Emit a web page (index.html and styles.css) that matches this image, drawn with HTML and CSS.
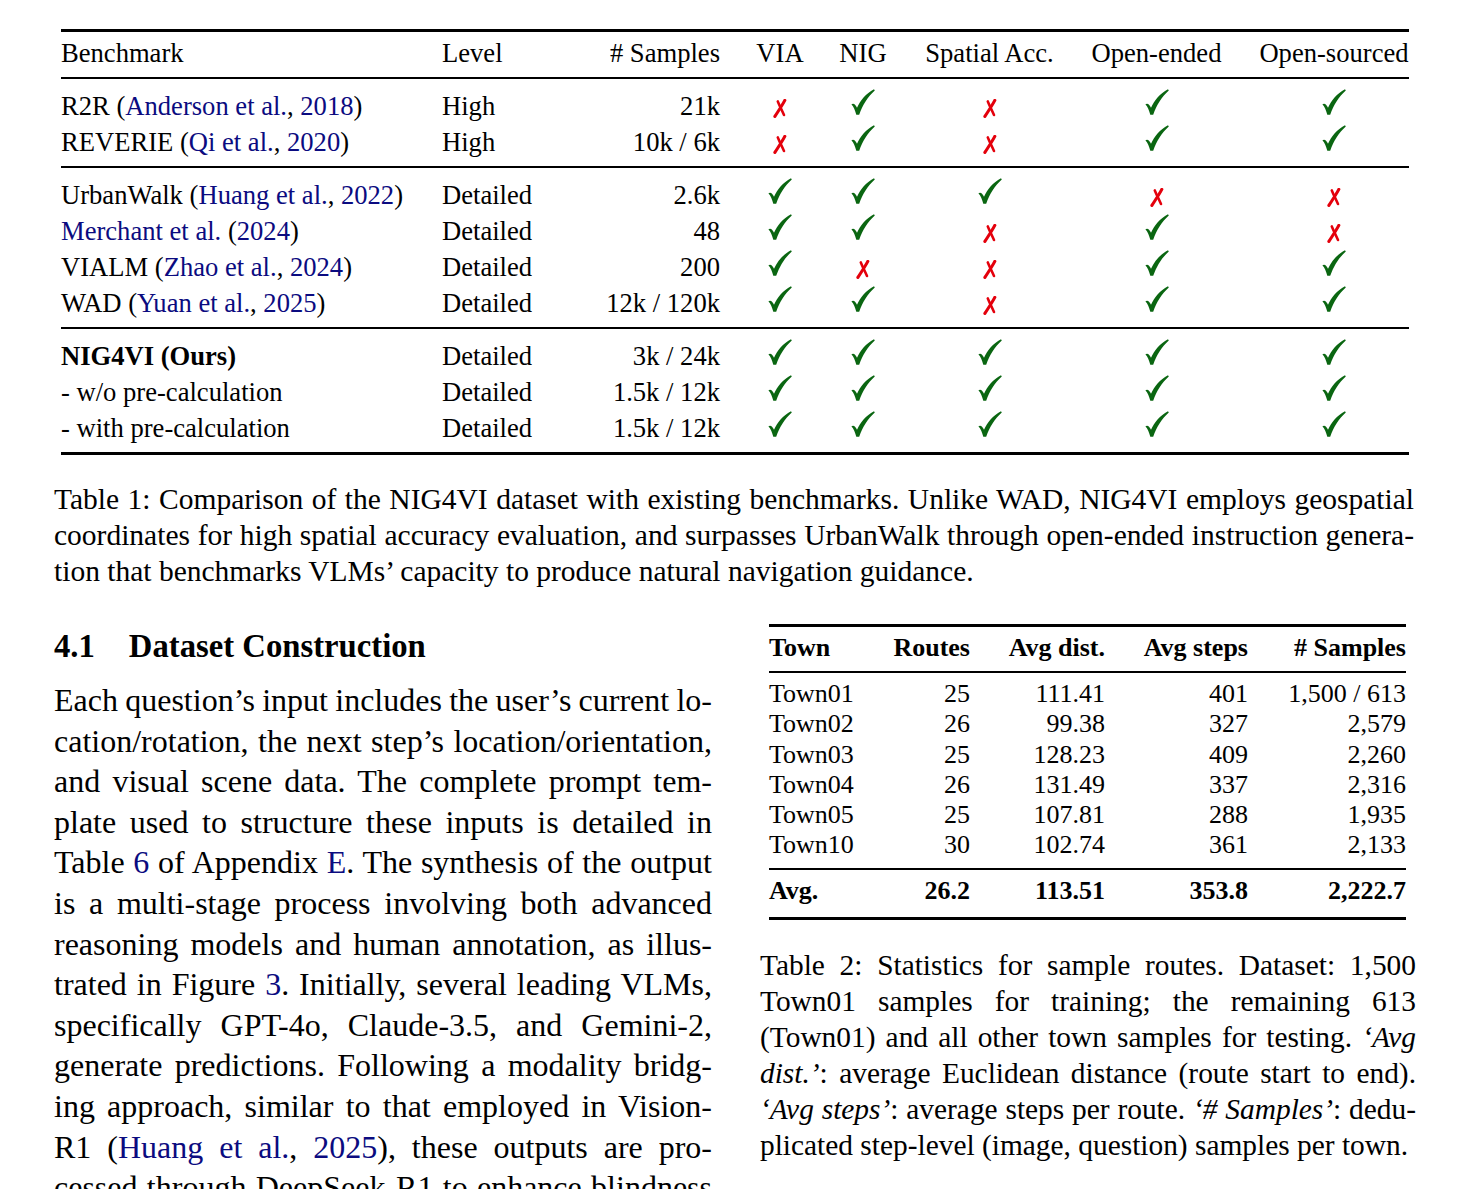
FILE: index.html
```html
<!DOCTYPE html>
<html>
<head>
<meta charset="utf-8">
<link rel="stylesheet" href="styles.css">
<title>NIG4VI</title>
</head>
<body>
<svg width="0" height="0" class="defs">
  <defs>
    <symbol id="chk" viewBox="0 0 24 26">
      <path d="M0.4,15.3 C2.8,13.6 4.7,16.0 6.0,18.8 C9.5,11.2 14.8,4.5 23.0,0.2 L23.8,1.5 C16.8,7.9 11.8,15.5 8.2,25.8 L5.3,25.8 C4.2,21.6 2.6,17.6 0.4,15.3 Z"/>
    </symbol>
    <symbol id="crs" viewBox="0 0 14 19">
      <path d="M11.8,1.4 C9.2,6.4 5.2,12.2 1.9,17.4" fill="none" stroke-width="3.1" stroke-linecap="round"/>
      <path d="M4.8,2.4 C6.9,7.4 9.0,11.6 11.0,16.0" fill="none" stroke-width="2.6" stroke-linecap="round"/>
    </symbol>
  </defs>
</svg>

<div class="page">
  <table class="t1">
    <colgroup>
      <col class="w381"><col class="w130"><col class="w148"><col class="w100"><col class="w86"><col class="w167"><col class="w167"><col class="w169">
    </colgroup>
    <thead>
      <tr>
        <th class="l">Benchmark</th><th class="l">Level</th><th class="r"># Samples</th>
        <th class="c via">VIA</th><th class="c">NIG</th><th class="c">Spatial Acc.</th><th class="c">Open-ended</th><th class="c os">Open-sourced</th>
      </tr>
    </thead>
    <tbody>
      <tr>
        <td>R2R (<span class="cite">Anderson et al.</span>, <span class="cite">2018</span>)</td><td>High</td><td class="r">21k</td>
        <td class="c via"><svg class="x"><use href="#crs"/></svg></td><td class="c"><svg class="ok"><use href="#chk"/></svg></td><td class="c"><svg class="x"><use href="#crs"/></svg></td><td class="c"><svg class="ok"><use href="#chk"/></svg></td><td class="c os"><svg class="ok"><use href="#chk"/></svg></td>
      </tr>
      <tr>
        <td>REVERIE (<span class="cite">Qi et al.</span>, <span class="cite">2020</span>)</td><td>High</td><td class="r">10k / 6k</td>
        <td class="c via"><svg class="x"><use href="#crs"/></svg></td><td class="c"><svg class="ok"><use href="#chk"/></svg></td><td class="c"><svg class="x"><use href="#crs"/></svg></td><td class="c"><svg class="ok"><use href="#chk"/></svg></td><td class="c os"><svg class="ok"><use href="#chk"/></svg></td>
      </tr>
    </tbody>
    <tbody>
      <tr>
        <td>UrbanWalk (<span class="cite">Huang et al.</span>, <span class="cite">2022</span>)</td><td>Detailed</td><td class="r">2.6k</td>
        <td class="c via"><svg class="ok"><use href="#chk"/></svg></td><td class="c"><svg class="ok"><use href="#chk"/></svg></td><td class="c"><svg class="ok"><use href="#chk"/></svg></td><td class="c"><svg class="x"><use href="#crs"/></svg></td><td class="c os"><svg class="x"><use href="#crs"/></svg></td>
      </tr>
      <tr>
        <td><span class="cite">Merchant et al.</span> (<span class="cite">2024</span>)</td><td>Detailed</td><td class="r">48</td>
        <td class="c via"><svg class="ok"><use href="#chk"/></svg></td><td class="c"><svg class="ok"><use href="#chk"/></svg></td><td class="c"><svg class="x"><use href="#crs"/></svg></td><td class="c"><svg class="ok"><use href="#chk"/></svg></td><td class="c os"><svg class="x"><use href="#crs"/></svg></td>
      </tr>
      <tr>
        <td>VIALM (<span class="cite">Zhao et al.</span>, <span class="cite">2024</span>)</td><td>Detailed</td><td class="r">200</td>
        <td class="c via"><svg class="ok"><use href="#chk"/></svg></td><td class="c"><svg class="x"><use href="#crs"/></svg></td><td class="c"><svg class="x"><use href="#crs"/></svg></td><td class="c"><svg class="ok"><use href="#chk"/></svg></td><td class="c os"><svg class="ok"><use href="#chk"/></svg></td>
      </tr>
      <tr>
        <td>WAD (<span class="cite">Yuan et al.</span>, <span class="cite">2025</span>)</td><td>Detailed</td><td class="r">12k / 120k</td>
        <td class="c via"><svg class="ok"><use href="#chk"/></svg></td><td class="c"><svg class="ok"><use href="#chk"/></svg></td><td class="c"><svg class="x"><use href="#crs"/></svg></td><td class="c"><svg class="ok"><use href="#chk"/></svg></td><td class="c os"><svg class="ok"><use href="#chk"/></svg></td>
      </tr>
    </tbody>
    <tbody>
      <tr>
        <td><b>NIG4VI (Ours)</b></td><td>Detailed</td><td class="r">3k / 24k</td>
        <td class="c via"><svg class="ok"><use href="#chk"/></svg></td><td class="c"><svg class="ok"><use href="#chk"/></svg></td><td class="c"><svg class="ok"><use href="#chk"/></svg></td><td class="c"><svg class="ok"><use href="#chk"/></svg></td><td class="c os"><svg class="ok"><use href="#chk"/></svg></td>
      </tr>
      <tr>
        <td>- w/o pre-calculation</td><td>Detailed</td><td class="r">1.5k / 12k</td>
        <td class="c via"><svg class="ok"><use href="#chk"/></svg></td><td class="c"><svg class="ok"><use href="#chk"/></svg></td><td class="c"><svg class="ok"><use href="#chk"/></svg></td><td class="c"><svg class="ok"><use href="#chk"/></svg></td><td class="c os"><svg class="ok"><use href="#chk"/></svg></td>
      </tr>
      <tr>
        <td>- with pre-calculation</td><td>Detailed</td><td class="r">1.5k / 12k</td>
        <td class="c via"><svg class="ok"><use href="#chk"/></svg></td><td class="c"><svg class="ok"><use href="#chk"/></svg></td><td class="c"><svg class="ok"><use href="#chk"/></svg></td><td class="c"><svg class="ok"><use href="#chk"/></svg></td><td class="c os"><svg class="ok"><use href="#chk"/></svg></td>
      </tr>
    </tbody>
  </table>

  <p class="cap1">
    <span class="ln">Table 1: Comparison of the NIG4VI dataset with existing benchmarks. Unlike WAD, NIG4VI employs geospatial</span>
    <span class="ln">coordinates for high spatial accuracy evaluation, and surpasses UrbanWalk through open-ended instruction genera-</span>
    <span class="ln last">tion that benchmarks VLMs’ capacity to produce natural navigation guidance.</span>
  </p>

  <div class="cols">
    <div class="left">
      <h2 class="sec"><span class="secnum">4.1</span>Dataset Construction</h2>
      <p class="body">
        <span class="ln">Each question’s input includes the user’s current lo-</span>
        <span class="ln">cation/rotation, the next step’s location/orientation,</span>
        <span class="ln">and visual scene data. The complete prompt tem-</span>
        <span class="ln">plate used to structure these inputs is detailed in</span>
        <span class="ln">Table <span class="cite">6</span> of Appendix <span class="cite">E</span>. The synthesis of the output</span>
        <span class="ln">is a multi-stage process involving both advanced</span>
        <span class="ln">reasoning models and human annotation, as illus-</span>
        <span class="ln">trated in Figure <span class="cite">3</span>. Initially, several leading VLMs,</span>
        <span class="ln">specifically GPT-4o, Claude-3.5, and Gemini-2,</span>
        <span class="ln">generate predictions. Following a modality bridg-</span>
        <span class="ln">ing approach, similar to that employed in Vision-</span>
        <span class="ln">R1 (<span class="cite">Huang et al.</span>, <span class="cite">2025</span>), these outputs are pro-</span>
        <span class="ln">cessed through DeepSeek-R1 to enhance blindness</span>
      </p>
    </div>
    <div class="right">
      <table class="t2">
        <colgroup>
          <col class="v120"><col class="v81"><col class="v135"><col class="v143"><col class="v158">
        </colgroup>
        <thead>
          <tr><th class="l">Town</th><th class="r">Routes</th><th class="r">Avg dist.</th><th class="r">Avg steps</th><th class="r"># Samples</th></tr>
        </thead>
        <tbody>
          <tr><td>Town01</td><td class="r">25</td><td class="r">111.41</td><td class="r">401</td><td class="r">1,500 / 613</td></tr>
          <tr><td>Town02</td><td class="r">26</td><td class="r">99.38</td><td class="r">327</td><td class="r">2,579</td></tr>
          <tr><td>Town03</td><td class="r">25</td><td class="r">128.23</td><td class="r">409</td><td class="r">2,260</td></tr>
          <tr><td>Town04</td><td class="r">26</td><td class="r">131.49</td><td class="r">337</td><td class="r">2,316</td></tr>
          <tr><td>Town05</td><td class="r">25</td><td class="r">107.81</td><td class="r">288</td><td class="r">1,935</td></tr>
          <tr><td>Town10</td><td class="r">30</td><td class="r">102.74</td><td class="r">361</td><td class="r">2,133</td></tr>
        </tbody>
        <tbody class="avg">
          <tr><td>Avg.</td><td class="r">26.2</td><td class="r">113.51</td><td class="r">353.8</td><td class="r">2,222.7</td></tr>
        </tbody>
      </table>
      <p class="cap2">
        <span class="ln">Table 2: Statistics for sample routes. Dataset: 1,500</span>
        <span class="ln">Town01 samples for training; the remaining 613</span>
        <span class="ln">(Town01) and all other town samples for testing. <i>‘Avg</i></span>
        <span class="ln"><i>dist.’</i>: average Euclidean distance (route start to end).</span>
        <span class="ln"><i>‘Avg steps’</i>: average steps per route. <i>‘# Samples’</i>: dedu-</span>
        <span class="ln last">plicated step-level (image, question) samples per town.</span>
      </p>
    </div>
  </div>
</div>
</body>
</html>
```

FILE: styles.css
```css
html, body {
  margin: 0;
  padding: 0;
  background: #ffffff;
  height: 1189px;
  overflow: hidden;
}

body {
  font-family: "Liberation Serif", "Times New Roman", serif;
  color: #000000;
}

.defs {
  position: absolute;
  width: 0;
  height: 0;
}

.page {
  padding-top: 29px;
}

.cite {
  color: #0b0b80;
}

/* ---------- Table 1 ---------- */
.t1 {
  margin-left: 61px;
  width: 1348px;
  table-layout: fixed;
  border-collapse: collapse;
  border-top: 3px solid #000;
  border-bottom: 3px solid #000;
  font-size: 26.6px;
  line-height: 36px;
}

.w381 { width: 381px; }
.w130 { width: 130px; }
.w148 { width: 148px; }
.w100 { width: 100px; }
.w86 { width: 86px; }
.w167 { width: 167px; }
.w169 { width: 169px; }

.t1 th,
.t1 td {
  padding: 0;
  white-space: nowrap;
  font-weight: normal;
  text-align: left;
}

.t1 th {
  padding-top: 3px;
  padding-bottom: 6px;
  border-bottom: 2px solid #000;
}

.t1 tbody + tbody {
  border-top: 2px solid #000;
}

.t1 tbody tr:first-child td {
  padding-top: 9px;
}

.t1 tbody tr:last-child td {
  padding-bottom: 6px;
}

.t1 .r { text-align: right; }
.t1 .c { text-align: center; }
.t1 .via { padding-left: 20px; }
.t1 .os { padding-left: 19px; }

.ok {
  width: 24px;
  height: 26px;
  fill: #0a6611;
  vertical-align: 0px;
}

.x {
  width: 14px;
  height: 19px;
  stroke: #e4000c;
  fill: none;
  vertical-align: -3px;
}

/* ---------- Caption 1 ---------- */
.cap1 {
  margin: 26px 0 0 54px;
  width: 1360px;
  font-size: 29.5px;
  line-height: 36px;
}

.ln {
  display: block;
  text-align: justify;
  text-align-last: justify;
  white-space: nowrap;
}

.ln.last {
  text-align-last: left;
}

/* ---------- Columns ---------- */
.cols {
  display: flex;
  gap: 48px;
  margin: 35px 0 0 54px;
}

.left {
  width: 658px;
}

.right {
  width: 656px;
}

.sec {
  margin: 2px 0 0 0;
  font-size: 32.7px;
  line-height: 40px;
  font-weight: bold;
}

.secnum {
  margin-right: 34px;
}

.body {
  margin: 14px 0 0 0;
  font-size: 32px;
  line-height: 40.6px;
  word-spacing: -1.6px;
}

/* ---------- Table 2 ---------- */
.t2 {
  margin-left: 9px;
  width: 637px;
  table-layout: fixed;
  border-collapse: collapse;
  border-top: 3px solid #000;
  border-bottom: 3px solid #000;
  font-size: 26px;
  line-height: 30.2px;
}

.v120 { width: 120px; }
.v81 { width: 81px; }
.v135 { width: 135px; }
.v143 { width: 143px; }
.v158 { width: 158px; }

.t2 th,
.t2 td {
  padding: 0;
  white-space: nowrap;
  text-align: left;
}

.t2 th {
  font-weight: bold;
  padding-top: 6px;
  padding-bottom: 8px;
  border-bottom: 2px solid #000;
}

.t2 .r { text-align: right; }

.t2 tbody tr:first-child td {
  padding-top: 6px;
}

.t2 tbody tr:last-child td {
  padding-bottom: 8px;
}

.t2 tbody.avg {
  border-top: 2px solid #000;
  font-weight: bold;
}

.t2 tbody.avg tr td {
  padding-top: 6px;
  padding-bottom: 10px;
}

/* ---------- Caption 2 ---------- */
.cap2 {
  margin: 27px 0 0 0;
  font-size: 29.4px;
  line-height: 36px;
}
```
